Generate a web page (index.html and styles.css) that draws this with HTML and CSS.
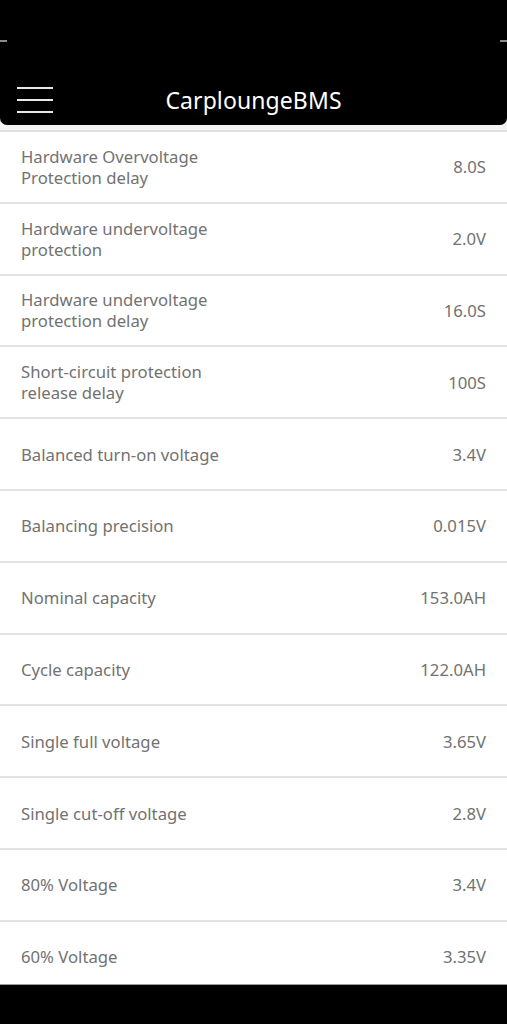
FILE: index.html
```html
<!DOCTYPE html>
<html>
<head>
<meta charset="utf-8">
<link rel="stylesheet" href="styles.css">
</head>
<body>
<div class="screen">
  <header class="topbar">
    <span class="tick tick-left"></span>
    <span class="tick tick-right"></span>
    <div class="appbar">
      <div class="menu"><span></span><span></span><span></span></div>
      <div class="title">CarploungeBMS</div>
    </div>
  </header>
  <main class="content">
    <ul class="list">
      <li class="row"><span class="label">Hardware Overvoltage Protection delay</span><span class="value">8.0S</span></li>
      <li class="row"><span class="label">Hardware undervoltage protection</span><span class="value">2.0V</span></li>
      <li class="row"><span class="label">Hardware undervoltage protection delay</span><span class="value">16.0S</span></li>
      <li class="row"><span class="label">Short-circuit protection release delay</span><span class="value">100S</span></li>
      <li class="row"><span class="label">Balanced turn-on voltage</span><span class="value">3.4V</span></li>
      <li class="row"><span class="label">Balancing precision</span><span class="value">0.015V</span></li>
      <li class="row"><span class="label">Nominal capacity</span><span class="value">153.0AH</span></li>
      <li class="row"><span class="label">Cycle capacity</span><span class="value">122.0AH</span></li>
      <li class="row"><span class="label">Single full voltage</span><span class="value">3.65V</span></li>
      <li class="row"><span class="label">Single cut-off voltage</span><span class="value">2.8V</span></li>
      <li class="row"><span class="label">80% Voltage</span><span class="value">3.4V</span></li>
      <li class="row"><span class="label">60% Voltage</span><span class="value">3.35V</span></li>
    </ul>
  </main>
  <footer class="navbar"></footer>
</div>
</body>
</html>
```
FILE: styles.css
```css
* { box-sizing: border-box; }
html, body { margin: 0; padding: 0; background: #000; }
body { font-family: "Noto Sans", "Open Sans", sans-serif; }
.screen {
  width: 507px;
  height: 1024px;
  display: flex;
  flex-direction: column;
  overflow: hidden;
  background: #f4f4f4;
}
.topbar {
  position: relative;
  height: 125px;
  flex: none;
  background: #000;
  border-radius: 0 0 7px 7px;
  display: flex;
  flex-direction: column;
  justify-content: flex-end;
}
.tick {
  position: absolute;
  top: 40px;
  width: 7px;
  height: 2px;
  background: #8a8a8a;
}
.tick-left { left: 0; }
.tick-right { right: 0; }
.appbar {
  height: 50px;
  position: relative;
  display: flex;
  align-items: center;
  justify-content: center;
  padding-bottom: 0;
}
.menu {
  position: absolute;
  left: 17px;
  top: 12px;
  width: 36px;
  display: flex;
  flex-direction: column;
  gap: 10px;
}
.menu span {
  display: block;
  height: 2px;
  background: #e8e8e8;
}
.title {
  color: #fff;
  font-size: 23px;
  letter-spacing: 0.1px;
}
.content {
  flex: 1;
  overflow: hidden;
  padding-top: 5px;
}
.list {
  list-style: none;
  margin: 0;
  padding: 0;
  background: #fff;
  border-top: 2px solid #e2e2e2;
}
.row {
  height: 71.8px;
  border-bottom: 2px solid #e2e2e2;
  display: flex;
  align-items: center;
  justify-content: space-between;
  padding: 0 21px;
  color: #727272;
  font-size: 16.7px;
  line-height: 21px;
}
.label { width: 235px; }
.value { text-align: right; }
.navbar {
  height: 40px;
  flex: none;
  background: #000;
  border-top: 1px solid #9a9a9a;
}
```
